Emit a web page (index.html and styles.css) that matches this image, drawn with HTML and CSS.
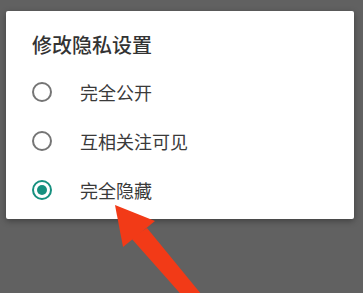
FILE: index.html
```html
<!DOCTYPE html>
<html lang="zh-CN">
<head>
  <meta charset="UTF-8">
  <title>修改隐私设置</title>
  <link rel="stylesheet" href="styles.css">
</head>
<body>
  <div class="dialog">
    <div class="title">修改隐私设置</div>
    <div class="options">
      <div class="option"><span class="radio"></span><span class="label">完全公开</span></div>
      <div class="option"><span class="radio"></span><span class="label">互相关注可见</span></div>
      <div class="option"><span class="radio checked"></span><span class="label">完全隐藏</span></div>
    </div>
  </div>

  <!-- red pointer arrow drawn over the screenshot -->
  <svg class="arrow" width="363" height="293" viewBox="0 0 363 293">
    <path d="M131 238 L147 228 L206 300 L186 300 Z" fill="#f23a17"/>
    <path d="M115 205 L123 247 L155 221 Z" fill="#f23a17"/>
  </svg>
</body>
</html>
```

FILE: styles.css
```css
html {
  box-sizing: border-box;
}

*, *:before, *:after {
  box-sizing: inherit;
}

body {
  margin: 0;
  width: 363px;
  height: 293px;
  overflow: hidden;
  background: #616161;
  font-family: "Noto Sans CJK SC", "Noto Sans", sans-serif;
  position: relative;
}

.dialog {
  margin: 11px 0 0 6px;
  width: 348px;
  height: 208px;
  background: #fff;
  border-radius: 2px;
  box-shadow: 0 2px 6px rgba(0,0,0,0.35);
  padding: 20px 0 0 26px;
}

.title {
  font-size: 20px;
  line-height: 28px;
  color: #333;
  font-weight: 500;
  margin-bottom: 8px;
}

.option {
  height: 49px;
  display: flex;
  align-items: center;
}

.radio {
  width: 20px;
  height: 20px;
  border: 2px solid #757575;
  border-radius: 50%;
  margin-right: 28px;
  display: flex;
  align-items: center;
  justify-content: center;
}

.radio.checked {
  border-color: #16907f;
}

.radio.checked:after {
  content: "";
  width: 10px;
  height: 10px;
  border-radius: 50%;
  background: #16907f;
}

.label {
  font-size: 18px;
  color: #3a3a3a;
}

.arrow {
  position: absolute;
  left: 0;
  top: 0;
}
```
